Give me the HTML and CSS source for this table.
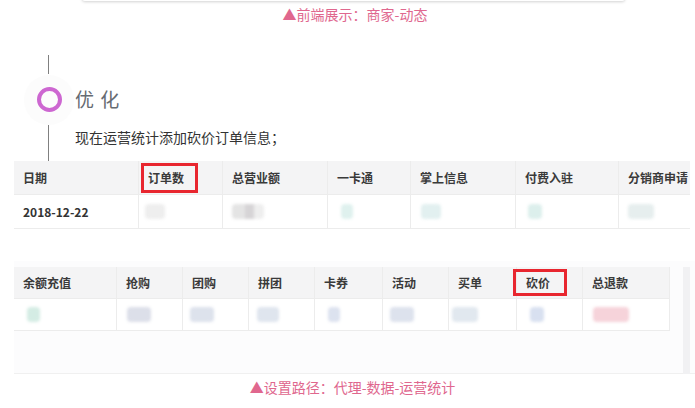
FILE: index.html
```html
<!DOCTYPE html>
<html lang="zh">
<head>
<meta charset="utf-8">
<link rel="stylesheet" href="styles.css">
</head>
<body>
<div class="topcard"></div>
<p class="caption cap1">▲前端展示：商家-动态</p>

<section class="timeline">
  <div class="vline vtop"></div>
  <div class="node">
    <span class="halo"><span class="ring"></span></span>
    <h2 class="title">优 化</h2>
  </div>
  <div class="entry">
    <div class="vline vbody"></div>
    <p class="desc">现在运营统计添加砍价订单信息；</p>
  </div>
</section>

<div class="shot1">
  <div class="grid g1">
    <div class="th">日期</div>
    <div class="th mark"><span>订单数</span><i class="box box1"></i></div>
    <div class="th">总营业额</div>
    <div class="th">一卡通</div>
    <div class="th">掌上信息</div>
    <div class="th">付费入驻</div>
    <div class="th">分销商申请</div>
    <div class="td date">2018-12-22</div>
    <div class="td"><span class="blur" style="margin-left:6px;width:20px;background:#eeeeee"></span></div>
    <div class="td"><span class="blur b2" style="margin-left:9px;width:32px"></span></div>
    <div class="td"><span class="blur" style="margin-left:13px;width:12px;background:#dff1ee"></span></div>
    <div class="td"><span class="blur" style="margin-left:10px;width:20px;background:#e2f0f0"></span></div>
    <div class="td"><span class="blur" style="margin-left:12px;width:14px;background:#dcefec"></span></div>
    <div class="td"><span class="blur" style="margin-left:9px;width:26px;background:#e6eeee"></span></div>
  </div>
</div>

<div class="shot2">
  <div class="grid g2">
    <div class="th">余额充值</div>
    <div class="th">抢购</div>
    <div class="th">团购</div>
    <div class="th">拼团</div>
    <div class="th">卡券</div>
    <div class="th">活动</div>
    <div class="th">买单</div>
    <div class="th mark"><span>砍价</span><i class="box box2"></i></div>
    <div class="th">总退款</div>
    <div class="td"><span class="blur" style="margin-left:13px;width:13px;background:#d4ece4"></span></div>
    <div class="td"><span class="blur" style="margin-left:10px;width:24px;background:#dcdfe9"></span></div>
    <div class="td"><span class="blur" style="margin-left:7px;width:24px;background:#dde2ec"></span></div>
    <div class="td"><span class="blur" style="margin-left:8px;width:22px;background:#dfe5ee"></span></div>
    <div class="td"><span class="blur" style="margin-left:13px;width:12px;background:#dce2ef"></span></div>
    <div class="td"><span class="blur" style="margin-left:7px;width:24px;background:#dde2ed"></span></div>
    <div class="td"><span class="blur" style="margin-left:3px;width:26px;background:#e1e8ef"></span></div>
    <div class="td"><span class="blur" style="margin-left:13px;width:14px;background:#d8e0f0"></span></div>
    <div class="td"><span class="blur" style="margin-left:10px;width:36px;background:#f6d3da"></span></div>
  </div>
  <div class="scroll"></div>
</div>

<p class="caption cap2">▲设置路径：代理-数据-运营统计</p>
</body>
</html>
```

FILE: styles.css
```css
* { box-sizing: border-box; }
html, body {
  margin: 0;
  padding: 0;
  background: #ffffff;
  font-family: "Noto Sans CJK SC", "Noto Sans", sans-serif;
  width: 695px;
  height: 408px;
  overflow: hidden;
}
.topcard {
  margin: -8px 70px 0 82px;
  height: 9px;
  background: #ffffff;
  border-radius: 0 0 3px 3px;
  box-shadow: 0 1px 3px rgba(0, 0, 0, 0.18);
}
.caption {
  margin: 3px 0 0;
  text-align: center;
  color: #e0678e;
  font-size: 14px;
  line-height: 20px;
}
.cap1 { padding-left: 15px; }
.cap2 { margin-top: 3px; padding-left: 10px; }

.timeline {
  margin-top: 31px;
  padding-left: 24px;
}
.vline {
  width: 1px;
  background: #808080;
  margin-left: 24px;
}
.vtop { height: 19px; }
.node {
  display: flex;
  align-items: center;
  height: 51px;
}
.halo {
  width: 50px;
  height: 50px;
  border-radius: 50%;
  background: #fcfcfc;
  display: flex;
  align-items: center;
  justify-content: center;
}
.ring {
  width: 25px;
  height: 25px;
  border-radius: 50%;
  border: 4px solid #cd67d1;
}
.title {
  margin: -2px 0 0 1px;
  font-size: 19px;
  font-weight: normal;
  color: #666b72;
  line-height: 24px;
  letter-spacing: 1px;
}
.entry {
  display: flex;
  align-items: flex-start;
}
.vbody { height: 36px; }
.desc {
  margin: 0 0 0 26px;
  font-size: 14px;
  line-height: 24px;
  color: #333333;
}

.grid {
  display: grid;
  font-size: 12px;
  color: #333333;
}
.g1 {
  margin-left: 14px;
  width: 676px;
  grid-template-columns: 125px 84px 105px 83px 105px 103px 71px;
  grid-template-rows: 34px 34px;
}
.g2 {
  width: 656px;
  grid-template-columns: 103px 66px 66px 66px 68px 66px 68px 66px 87px;
  grid-template-rows: 32px 32px;
  background: #ffffff;
}
.th, .td {
  display: flex;
  align-items: center;
  padding-left: 9px;
  border-right: 1px solid #ececec;
  border-bottom: 1px solid #ececec;
  white-space: nowrap;
  overflow: hidden;
}
.th {
  background: #f4f4f5;
  font-weight: bold;
  color: #3a3a3a;
}
.td { padding-left: 0; background: #ffffff; }
.td.date { padding-left: 9px; font-weight: bold; color: #333; }
.g1 .th:nth-child(7), .g1 .td:nth-child(14) { border-right: none; }
.mark { position: relative; overflow: visible; }
.box {
  position: absolute;
  border: 3px solid #e8262f;
}
.box1 { left: 2px; top: 2px; width: 57px; height: 30px; }
.box2 { left: -4px; top: 2px; width: 54px; height: 27px; }

.blur {
  display: inline-block;
  height: 15px;
  border-radius: 4px;
  filter: blur(1.8px);
}
.b2 {
  background: linear-gradient(90deg, #e4e4e4 0 40%, #d6d4d6 40% 70%, #eeeeee 70%);
}

.shot1 { margin-top: 0; }
.shot2 {
  margin: 32px 0 0 14px;
  padding-top: 6px;
  height: 113px;
  background: #fcfcfd;
  border-bottom: 1px solid #f0f0f0;
  display: flex;
  align-items: flex-start;
}
.scroll {
  margin-left: 13px;
  width: 7px;
  height: 107px;
  background: #f1f1f3;
}
```
